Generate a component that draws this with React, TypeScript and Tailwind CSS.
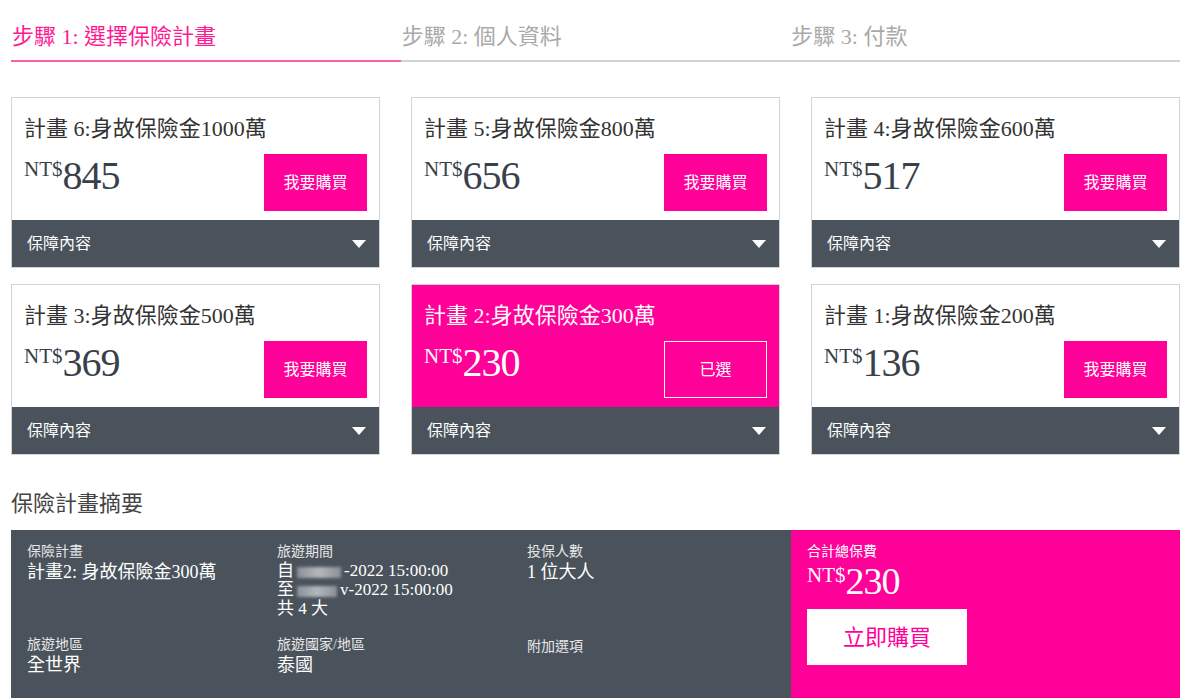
import React from 'react';

const PLANS = [
  { id: 6, amount: '1000', price: '845' },
  { id: 5, amount: '800', price: '656' },
  { id: 4, amount: '600', price: '517' },
  { id: 3, amount: '500', price: '369' },
  { id: 2, amount: '300', price: '230' },
  { id: 1, amount: '200', price: '136' },
];

const SELECTED = 2;

const STEPS = ['步驟 1: 選擇保險計畫', '步驟 2: 個人資料', '步驟 3: 付款'];

const Blur: React.FC<{ w: string }> = ({ w }) => (
  <span
    className={`mx-[3px] inline-block h-[11px] ${w} bg-gradient-to-r from-[#8a9096] via-[#b4b8bc] to-[#8a9096] align-middle blur-[1.5px]`}
  />
);

const PlanCard: React.FC<{ id: number; amount: string; price: string }> = ({ id, amount, price }) => {
  const selected = id === SELECTED;
  return (
    <div className={`flex flex-col border border-[#d4d4d4] ${selected ? 'bg-[#ff0099]' : 'bg-white'}`}>
      <div className="h-[122px] px-[12px] pt-[16px]">
        <div className={`text-[22px] leading-[30px] ${selected ? 'text-white' : 'text-[#333]'}`}>
          計畫 {id}:身故保險金{amount}萬
        </div>
        <div className="mt-[10px] flex items-start justify-between">
          <div className={`flex items-start pt-[2px] ${selected ? 'text-white' : 'text-[#38414b]'}`}>
            <span className="mt-[3px] text-[21px] leading-none">NT$</span>
            <span className="text-[40px] leading-none tracking-[-1px]">{price}</span>
          </div>
          {selected ? (
            <button className="flex h-[57px] w-[103px] items-center justify-center border border-white text-[16px] text-white">
              已選
            </button>
          ) : (
            <button className="flex h-[57px] w-[103px] items-center justify-center bg-[#ff0099] text-[16px] text-white">
              我要購買
            </button>
          )}
        </div>
      </div>
      {/* 保障內容 */}
      <div className="flex h-[47px] items-center justify-between bg-[#4a535b] pl-[15px] pr-[13px]">
        <span className="text-[16px] text-white">保障內容</span>
        <svg width="14" height="8" viewBox="0 0 14 8">
          <polygon points="0,0 14,0 7,8" fill="#fff" />
        </svg>
      </div>
    </div>
  );
};

const App: React.FC = () => {
  return (
    <div className="h-[698px] w-[1200px] overflow-hidden bg-white font-['Liberation_Serif','Noto_Sans_CJK_TC',sans-serif]">
      <div className="ml-[11px] w-[1169px]">
        {/* 步驟 */}
        <div className="grid grid-cols-3 pt-[22px]">
          {STEPS.map((s, i) => (
            <div
              key={s}
              className={`border-b-2 pb-[8px] pl-[1px] text-[22px] leading-[30px] ${
                i === 0 ? 'border-[#ff5cae] text-[#ff1a94]' : 'border-[#d2d2d2] text-[#a9a9a9]'
              }`}
            >
              {s}
            </div>
          ))}
        </div>

        {/* 計畫 */}
        <div className="mt-[35px] grid grid-cols-3 gap-x-[31px] gap-y-[16px]">
          {PLANS.map((p) => (
            <PlanCard key={p.id} {...p} />
          ))}
        </div>

        {/* 摘要 */}
        <h2 className="mt-[34px] text-[22px] leading-[30px] text-[#444]">保險計畫摘要</h2>
        <div className="mt-[11px] flex h-[180px]">
          <div className="flex-1 bg-[#4a535b] pl-[16px] pt-[13px] text-white">
            <div className="flex h-[93px]">
              <div className="w-[250px]">
                <div className="text-[14px] leading-[18px] text-[#e8e8e8]">保險計畫</div>
                <div className="text-[18px] leading-[22px]">計畫2: 身故保險金300萬</div>
              </div>
              <div className="w-[250px]">
                <div className="text-[14px] leading-[18px] text-[#e8e8e8]">旅遊期間</div>
                <div className="text-[17px] leading-[19px]">
                  自<Blur w="w-[44px]" />-2022 15:00:00
                </div>
                <div className="text-[17px] leading-[19px]">
                  至<Blur w="w-[40px]" />v-2022 15:00:00
                </div>
                <div className="text-[17px] leading-[19px]">共 4 大</div>
              </div>
              <div className="w-[250px]">
                <div className="text-[14px] leading-[18px] text-[#e8e8e8]">投保人數</div>
                <div className="text-[18px] leading-[22px]">1 位大人</div>
              </div>
            </div>
            <div className="flex">
              <div className="w-[250px]">
                <div className="text-[14px] leading-[18px] text-[#e8e8e8]">旅遊地區</div>
                <div className="text-[18px] leading-[22px]">全世界</div>
              </div>
              <div className="w-[250px]">
                <div className="text-[14px] leading-[18px] text-[#e8e8e8]">旅遊國家/地區</div>
                <div className="text-[18px] leading-[22px]">泰國</div>
              </div>
              <div className="w-[250px] pt-[2px]">
                <div className="text-[14px] leading-[18px] text-[#e8e8e8]">附加選項</div>
              </div>
            </div>
          </div>
          <div className="w-[389px] bg-[#ff0099] pl-[16px] pt-[13px] text-white">
            <div className="text-[14px] leading-[18px]">合計總保費</div>
            <div className="mt-[1px] flex items-start">
              <span className="mt-[3px] text-[21px] leading-none">NT$</span>
              <span className="text-[38px] leading-none tracking-[-1px]">230</span>
            </div>
            <button className="mt-[9px] flex h-[56px] w-[160px] items-center justify-center bg-white text-[22px] text-[#ff0099]">
              立即購買
            </button>
          </div>
        </div>
      </div>
    </div>
  );
};

export default App;
